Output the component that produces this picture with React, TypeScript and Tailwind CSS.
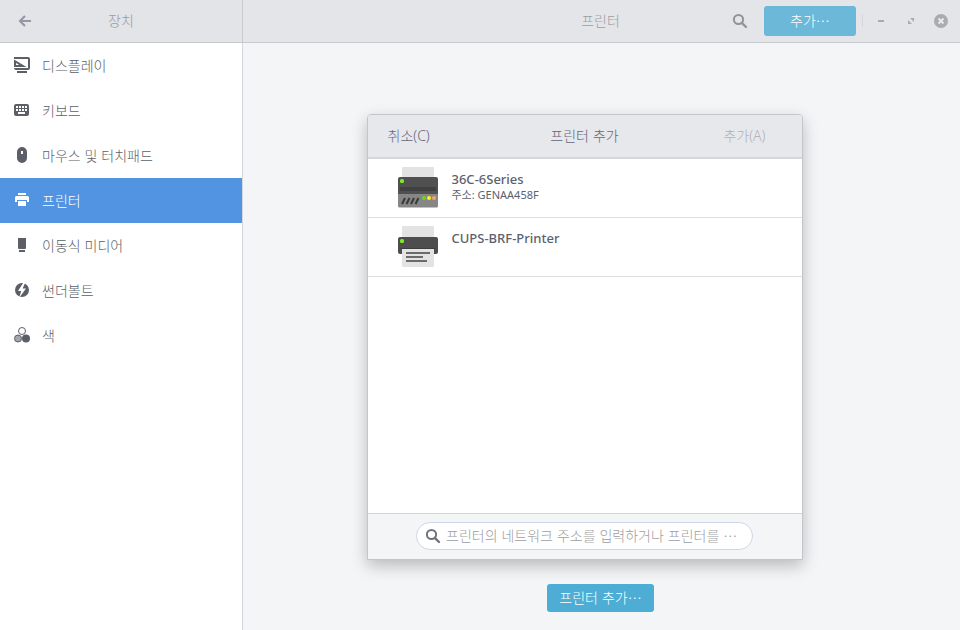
import { useState, type ReactNode } from "react";

const ko = "font-['Noto_Sans_CJK_KR','Noto_Sans',sans-serif]";
const latin = "font-['Noto_Sans','Noto_Sans_CJK_KR',sans-serif]";

function Icon({ children, size = 16 }: { children: ReactNode; size?: number }) {
  return (
    <svg width={size} height={size} viewBox={`0 0 ${size} ${size}`} fill="currentColor" aria-hidden="true" className="shrink-0">
      {children}
    </svg>
  );
}

function SearchIcon() {
  return (
    <Icon>
      <circle cx="6.500" cy="6.500" r="4.600" fill="none" stroke="currentColor" strokeWidth="2" />
      <path d="M9.800 9.800 14 14" stroke="currentColor" strokeWidth="2.400" strokeLinecap="round" />
    </Icon>
  );
}

const devices: { name: string; icon: ReactNode }[] = [
  {
    name: "디스플레이",
    icon: (
      <Icon>
        <path d="M0 0h14a2 2 0 0 1 2 2v9a2 2 0 0 1-2 2H2a2 2 0 0 1-2-2h14V2H0z" />
        <path d="M0 2.500 12.500 10H0zM2 6v2h3.400z" fillRule="evenodd" />
        <path d="M3 14h10v2H3z" />
      </Icon>
    ),
  },
  {
    name: "키보드",
    icon: (
      <Icon>
        <path
          fillRule="evenodd"
          d="M2 2h11a2 2 0 0 1 2 2v8a2 2 0 0 1-2 2H2a2 2 0 0 1-2-2V4a2 2 0 0 1 2-2zM2 4v2h2V4zm3 0v2h2V4zm3 0v2h2V4zm3 0v2h2V4zM2 7v2h2V7zm3 0v2h2V7zm3 0v2h2V7zm3 0v2h2V7zM4 10v2h7v-2z"
        />
      </Icon>
    ),
  },
  {
    name: "마우스 및 터치패드",
    icon: (
      <Icon>
        <path fillRule="evenodd" d="M8 0a5 5 0 0 1 5 5v6a5 5 0 0 1-10 0V5a5 5 0 0 1 5-5zM7 4v3h2V4z" />
      </Icon>
    ),
  },
  {
    name: "프린터",
    icon: (
      <Icon>
        <path d="M4 1h8v2H4zM2.500 4h11a1.500 1.500 0 0 1 1.500 1.500V10h-2V8H3v2H1V5.500A1.500 1.500 0 0 1 2.500 4zM4 9h8v5H4z" />
      </Icon>
    ),
  },
  {
    name: "이동식 미디어",
    icon: (
      <Icon>
        <path d="M4 1h8v10a1 1 0 0 1-1 1H5a1 1 0 0 1-1-1zM5 13h6v2H5z" />
      </Icon>
    ),
  },
  {
    name: "썬더볼트",
    icon: (
      <Icon>
        <circle cx="8" cy="8" r="7" />
        <path d="M9.800 0 4 9h3.300L5 16l7-9.500H8.600L11.500 0z" className="fill-white" />
      </Icon>
    ),
  },
  {
    name: "색",
    icon: (
      <Icon>
        <circle cx="8" cy="4" r="3.500" fill="none" stroke="currentColor" />
        <circle cx="4" cy="11.500" r="3.500" className="fill-[#a3a6aa]" stroke="currentColor" />
        <circle cx="12" cy="11.500" r="4" />
      </Icon>
    ),
  },
];

function SeriesPrinter() {
  return (
    <Icon size={42}>
      <path d="M5 2a1 1 0 0 1 1-1h30a1 1 0 0 1 1 1v10H5z" fill="#e3e3e3" />
      <path d="M1 28h40v12a1.500 1.500 0 0 1-1.500 1.500h-37A1.500 1.500 0 0 1 1 40z" fill="#868686" />
      <path d="M3 11h36a2 2 0 0 1 2 2v15H1V13a2 2 0 0 1 2-2z" fill="#505050" />
      <path d="M3 21h36v4H3z" fill="#404040" />
      <rect x="3" y="13" width="4" height="4" rx="1.500" fill="#78f01e" />
      <path d="M5 38l3-6M9.500 38l3-6M14 38l3-6M18.500 38l3-6" stroke="#3a3a3a" strokeWidth="2" />
      <circle cx="27" cy="32" r="2" fill="#6fd81c" />
      <circle cx="32" cy="32" r="2" fill="#fff01c" />
      <circle cx="37" cy="32" r="2" fill="#f2a95c" />
    </Icon>
  );
}

function PagePrinter() {
  return (
    <Icon size={42}>
      <path d="M5 2a1 1 0 0 1 1-1h30a1 1 0 0 1 1 1v10H5z" fill="#e3e3e3" />
      <path d="M3 12h36a2 2 0 0 1 2 2v13a2 2 0 0 1-2 2H3a2 2 0 0 1-2-2V14a2 2 0 0 1 2-2z" fill="#4d4d4d" />
      <path d="M4 23h34v1H4z" fill="#3c3c3c" />
      <path d="M5 24h32v17a1 1 0 0 1-1 1H6a1 1 0 0 1-1-1z" fill="#e3e3e3" />
      <rect x="3" y="14" width="4" height="4" rx="1.500" fill="#78f01e" />
      <path d="M9 27h24v2H9zM9 31h17v2H9zM9 35h21v2H9z" fill="#6b6b6b" />
    </Icon>
  );
}

const printers = [
  { name: "36C-6Series", address: "주소: GENAA458F", picture: <SeriesPrinter /> },
  { name: "CUPS-BRF-Printer", address: "", picture: <PagePrinter /> },
];

function Sidebar() {
  const [selected, setSelected] = useState("프린터");
  return (
    <aside className="flex w-[243px] shrink-0 flex-col border-r border-[#d5d6dc] bg-white">
      <header className="-mr-px flex h-[43px] items-center border-r border-b border-[#c8c9ce] bg-[#e2e4e7] text-[#979ba6]">
        <button type="button" aria-label="뒤로" className="flex w-[50px] justify-center text-[#9599a6]">
          <Icon>
            <path d="M8 3 3 8l5 5M3.500 8H14" fill="none" stroke="currentColor" strokeWidth="2.200" />
          </Icon>
        </button>
        <h2 className="flex-1 pr-[50px] pb-0.5 text-center text-sm font-light">장치</h2>
      </header>
      <nav>
        {devices.map((d) => (
          <button
            key={d.name}
            type="button"
            onClick={() => setSelected(d.name)}
            aria-current={d.name === selected ? "page" : undefined}
            className={`flex h-[45px] w-full items-center gap-3 px-3.5 pb-0.5 text-left text-sm font-light ${
              d.name === selected ? "bg-[#5294e2] text-white" : "text-[#5c5f68]"
            }`}
          >
            {d.icon}
            <span>{d.name}</span>
          </button>
        ))}
      </nav>
    </aside>
  );
}

function TitleBar() {
  return (
    <header className="grid h-[43px] grid-cols-[1fr_auto_1fr] items-center border-b border-[#c8c9ce] bg-[#e4e5e8] pr-0.5 text-[#a9abb1]">
      <h1 className="col-start-2 pb-0.5 text-sm font-light text-[#9c9ea4]">프린터</h1>
      <div className="flex items-center justify-end pr-0.5">
        <button type="button" aria-label="검색" className="mr-4 text-[#909399]">
          <SearchIcon />
        </button>
        <button type="button" className="h-[30px] w-[92px] rounded-[3px] bg-[#6bb8d9] pb-0.5 text-sm font-light text-white">
          추가…
        </button>
        <span className="mr-[3px] ml-1.5 h-3 w-px bg-[#d5d6da]" />
        <button type="button" aria-label="최소화" className="flex w-[30px] justify-center">
          <Icon>
            <path d="M5 7h6v2H5z" />
          </Icon>
        </button>
        <button type="button" aria-label="복원" className="flex w-[30px] justify-center">
          <Icon>
            <path d="M7 5h4v4zM5 7v4h4z" />
          </Icon>
        </button>
        <button type="button" aria-label="닫기" className="flex w-[30px] justify-center">
          <Icon>
            <circle cx="8" cy="8" r="7" />
            <path d="m5.500 5.500 5 5m0-5-5 5" stroke="#e9eaec" strokeWidth="2" />
          </Icon>
        </button>
      </div>
    </header>
  );
}

function AddDialog() {
  return (
    <section
      role="dialog"
      aria-labelledby="dialog-title"
      className="flex h-[446px] w-[436px] flex-col rounded-t-[4px] border border-[#c4c5c9] bg-white shadow-[0_6px_16px_rgba(0,0,0,0.24)]"
    >
      <header className="grid h-11 shrink-0 grid-cols-3 items-center rounded-t-[3px] border-b-2 border-[#d5d6da] bg-[#e7e8eb] px-5 text-sm font-light text-[#62677c]">
        <button type="button" className={`text-left ${latin}`}>
          취소(C)
        </button>
        <h2 id="dialog-title" className="pb-0.5 text-center">
          프린터 추가
        </h2>
        <button type="button" disabled className={`pr-4 text-right text-[#b0b2b9] ${latin}`}>
          추가(A)
        </button>
      </header>
      <ul className="flex-1">
        {printers.map((p) => (
          <li key={p.name} className="flex h-[59px] items-center border-b border-[#dfdfe1] pb-0.5 pl-[29px]">
            {p.picture}
            <div className="ml-[13px] h-9 text-[#5c616c]">
              <p className={`text-[13px] leading-5 font-medium ${latin}`}>{p.name}</p>
              <p className={`text-[11px] leading-3 font-normal ${latin}`}>{p.address}</p>
            </div>
          </li>
        ))}
      </ul>
      <footer className="flex h-[46px] shrink-0 justify-center border-t border-[#d2d4d9] bg-[#f4f5f7] pt-2">
        <label className="flex h-7 w-[337px] items-center gap-1 rounded-full border border-[#cfd6e6] bg-white px-2 text-[#6f737b]">
          <SearchIcon />
          <input
            type="text"
            aria-label="프린터 검색"
            placeholder="프린터의 네트워크 주소를 입력하거나 프린터를 …"
            className="ml-px min-w-0 flex-1 pb-0.5 text-sm font-light outline-none placeholder:text-[#9c9ea4]"
          />
        </label>
      </footer>
    </section>
  );
}

export default function App() {
  return (
    <div lang="ko" className={`flex min-h-screen bg-[#f4f5f7] ${ko}`}>
      <Sidebar />
      <div className="flex min-w-0 flex-1 flex-col">
        <TitleBar />
        <main className="relative flex min-h-[587px] flex-1 flex-col items-center justify-end pr-0.5 pb-[18px]">
          <button type="button" className="h-7 rounded-[3px] bg-[#4dadd4] px-3 pb-0.5 text-sm font-light text-white">
            프린터 추가…
          </button>
          <div className="absolute inset-x-0 top-[71px] flex justify-center pr-[34px]">
            <AddDialog />
          </div>
        </main>
      </div>
    </div>
  );
}
